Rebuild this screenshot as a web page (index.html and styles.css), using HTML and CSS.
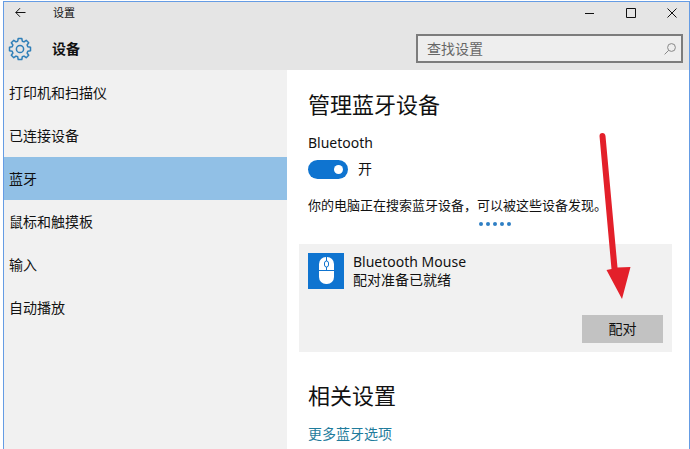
FILE: index.html
```html
<!DOCTYPE html>
<html lang="zh-CN">
<head>
	<meta charset="UTF-8">
	<meta name="viewport" content="width=device-width, initial-scale=1.0">
	<link rel="stylesheet" href="styles.css">
	<title>设置</title>
</head>
<body>
	<div class="window">
		<header class="top">
			<div class="titlebar">
				<button class="icon-btn back" type="button" aria-label="返回">
					<svg width="12" height="12" viewBox="0 0 12 12"><path d="M10.500 5.500H.8M5 1.200L.8 5.500L5 9.800"/></svg>
				</button>
				<span class="app-name">设置</span>
				<div class="controls">
					<button class="icon-btn" type="button" aria-label="最小化">
						<svg width="10" height="10" viewBox="0 0 10 10"><path d="M0 5.500h9"/></svg>
					</button>
					<button class="icon-btn" type="button" aria-label="最大化">
						<svg width="10" height="10" viewBox="0 0 10 10"><path d="M.5 .5h9v9h-9z"/></svg>
					</button>
					<button class="icon-btn" type="button" aria-label="关闭">
						<svg width="10" height="10" viewBox="0 0 10 10"><path d="M.5 .5l9 9M9.500 .5l-9 9"/></svg>
					</button>
				</div>
			</div>
			<div class="page-head">
				<svg class="gear" width="24" height="24" viewBox="-12 -12 24 24" aria-hidden="true">
					<path d="M-1.800 -10.500H1.800L2.300 -7.800L4 -7.100L6.200 -8.700L8.700 -6.200L7.100 -4L7.800 -2.300L10.500 -1.800V1.800L7.800 2.300L7.100 4L8.700 6.200L6.200 8.700L4 7.100L2.300 7.800L1.800 10.500H-1.800L-2.300 7.800L-4 7.100L-6.200 8.700L-8.700 6.200L-7.100 4L-7.800 2.300L-10.500 1.800V-1.800L-7.800 -2.300L-7.100 -4L-8.700 -6.200L-6.200 -8.700L-4 -7.100L-2.300 -7.800Z"/>
					<circle r="3.600"/>
				</svg>
				<strong class="page-name">设备</strong>
				<form class="search" role="search">
					<input class="search-input" type="text" placeholder="查找设置" aria-label="查找设置">
					<button class="search-btn" type="button" aria-label="搜索">
						<svg width="12" height="12" viewBox="0 0 12 12"><circle cx="7.500" cy="4.500" r="3.900"/><path d="M4.700 7.300L.6 11.400"/></svg>
					</button>
				</form>
			</div>
		</header>

		<div class="body">
			<nav class="side" aria-label="设备">
				<a class="side-link" href="#printers">打印机和扫描仪</a>
				<a class="side-link" href="#connected">已连接设备</a>
				<a class="side-link is-active" href="#bluetooth" aria-current="page">蓝牙</a>
				<a class="side-link" href="#mouse">鼠标和触摸板</a>
				<a class="side-link" href="#typing">输入</a>
				<a class="side-link" href="#autoplay">自动播放</a>
			</nav>

			<main class="content">
				<h1 class="title">管理蓝牙设备</h1>
				<label class="label" for="bt">Bluetooth</label>
				<div class="toggle-row">
					<input class="toggle" id="bt" type="checkbox" role="switch" checked>
					<span>开</span>
				</div>
				<p class="status">你的电脑正在搜索蓝牙设备，可以被这些设备发现。</p>
				<div class="dots" role="progressbar" aria-label="正在搜索">
					<i></i><i></i><i></i><i></i><i></i>
				</div>

				<section class="device">
					<div class="device-info">
						<svg class="device-icon" width="36" height="36" viewBox="0 0 36 36" aria-hidden="true">
							<rect class="tile" width="36" height="36"/>
							<rect class="mouse" x="11" y="4" width="15" height="27" rx="7"/>
							<path class="line" d="M10 17.500h17M18.500 3v5M18.500 14v3"/>
							<rect class="line" x="16.500" y="8" width="4" height="6" rx="2"/>
						</svg>
						<div>
							<div>Bluetooth Mouse</div>
							<div>配对准备已就绪</div>
						</div>
					</div>
					<button class="pair" type="button">配对</button>
					<svg class="pointer" width="40" height="172" viewBox="0 0 40 172" aria-hidden="true">
						<path d="M3.500 6Q3.500 3 6.500 3Q9 3 9.500 6L21.500 137.500L34.500 137L26 169L10.500 140L15.500 139Z"/>
					</svg>
				</section>

				<h2 class="title">相关设置</h2>
				<a class="more" href="#more">更多蓝牙选项</a>
			</main>
		</div>
	</div>
</body>
</html>
```
FILE: styles.css
```css
* {
  box-sizing: border-box;
  margin: 0;
  padding: 0;
}
body {
  background: #fff;
  color: #111;
  font: 14px/20px "Noto Sans", "Noto Sans CJK SC", sans-serif;
}
button, input {
  border: none;
  background: none;
  color: inherit;
  font: inherit;
}
svg {
  display: block;
  fill: none;
  stroke: currentColor;
}

.window {
  display: flex;
  flex-direction: column;
  min-height: calc(100vh - 1px);
  margin: 1px 0 0 3px;
  border: solid #659ce4;
  border-width: 1px 1px 0;
}

/* header */
.top {
  padding-bottom: 7px;
  background: #e5e5e5;
}
.titlebar {
  display: flex;
  align-items: center;
  height: 22px;
}
.icon-btn {
  display: grid;
  place-items: center;
  width: 34px;
  height: 22px;
}
.app-name {
  margin-left: 15px;
  font-size: 11px;
}
.controls {
  display: flex;
  gap: 7px;
  margin-left: auto;
}
.page-head {
  display: flex;
  align-items: center;
  padding: 10px 6px 0 4px;
}
.gear {
  color: #2f7fb8;
  stroke-width: 1.5;
  stroke-linejoin: round;
}
.page-name {
  margin-left: 20px;
}
.search {
  display: flex;
  width: 267px;
  height: 29px;
  margin-left: auto;
  border: 2px solid #7c7c7c;
  background: #eee;
}
.search-input {
  flex: 1;
  min-width: 0;
  padding-left: 9px;
  outline: none;
}
.search-input::placeholder {
  color: #666;
  opacity: 1;
}
.search-btn {
  display: grid;
  place-items: center;
  width: 22px;
  color: #888;
}

/* sidebar + content */
.body {
  display: grid;
  flex: 1;
  grid-template-columns: 283px 1fr;
}
.side {
  padding-top: 1px;
  background: #f1f1f1;
}
.side-link {
  display: flex;
  align-items: center;
  height: 43px;
  padding-left: 5px;
  color: inherit;
  text-decoration: none;
}
.side-link.is-active {
  background: #91c0e6;
}
.content {
  padding: 18px 17px 5px 21px;
}
.title {
  font-size: 22px;
  font-weight: 400;
  line-height: 32px;
}
.label {
  display: block;
  margin-top: 13px;
}
.toggle-row {
  display: flex;
  align-items: center;
  gap: 10px;
  margin-top: 6px;
}
.toggle {
  display: flex;
  align-items: center;
  width: 40px;
  height: 19px;
  padding: 0 5px;
  border-radius: 10px;
  background: #0f74d0;
  appearance: none;
}
.toggle::before {
  width: 9px;
  height: 9px;
  border-radius: 50%;
  background: #fff;
  content: '';
}
.toggle:checked::before {
  margin-left: auto;
}
.status {
  margin-top: 16px;
  font-size: 13px;
}
.dots {
  display: flex;
  justify-content: center;
  gap: 3px;
  margin: 7px -9px 0 0;
}
.dots i {
  width: 4px;
  height: 4px;
  border-radius: 50%;
  background: #2f7fc4;
}

/* found device */
.device {
  position: relative;
  display: flex;
  flex-direction: column;
  gap: 26px;
  margin: 18px 0 27px -9px;
  padding: 9px;
  background: #f1f1f1;
}
.device-info {
  display: flex;
  gap: 9px;
  line-height: 18px;
}
.tile {
  fill: #0f74d0;
  stroke: none;
}
.mouse {
  fill: #fff;
  stroke: none;
}
.line {
  stroke: #0f74d0;
}
.pair {
  align-self: flex-end;
  width: 81px;
  height: 28px;
  background: #c2c2c2;
}
.pointer {
  position: absolute;
  top: -114px;
  right: 36px;
  fill: #e3202a;
  stroke: none;
  pointer-events: none;
}
.more {
  display: inline-block;
  margin-top: 13px;
  color: #1f7c9c;
  text-decoration: none;
}
```
